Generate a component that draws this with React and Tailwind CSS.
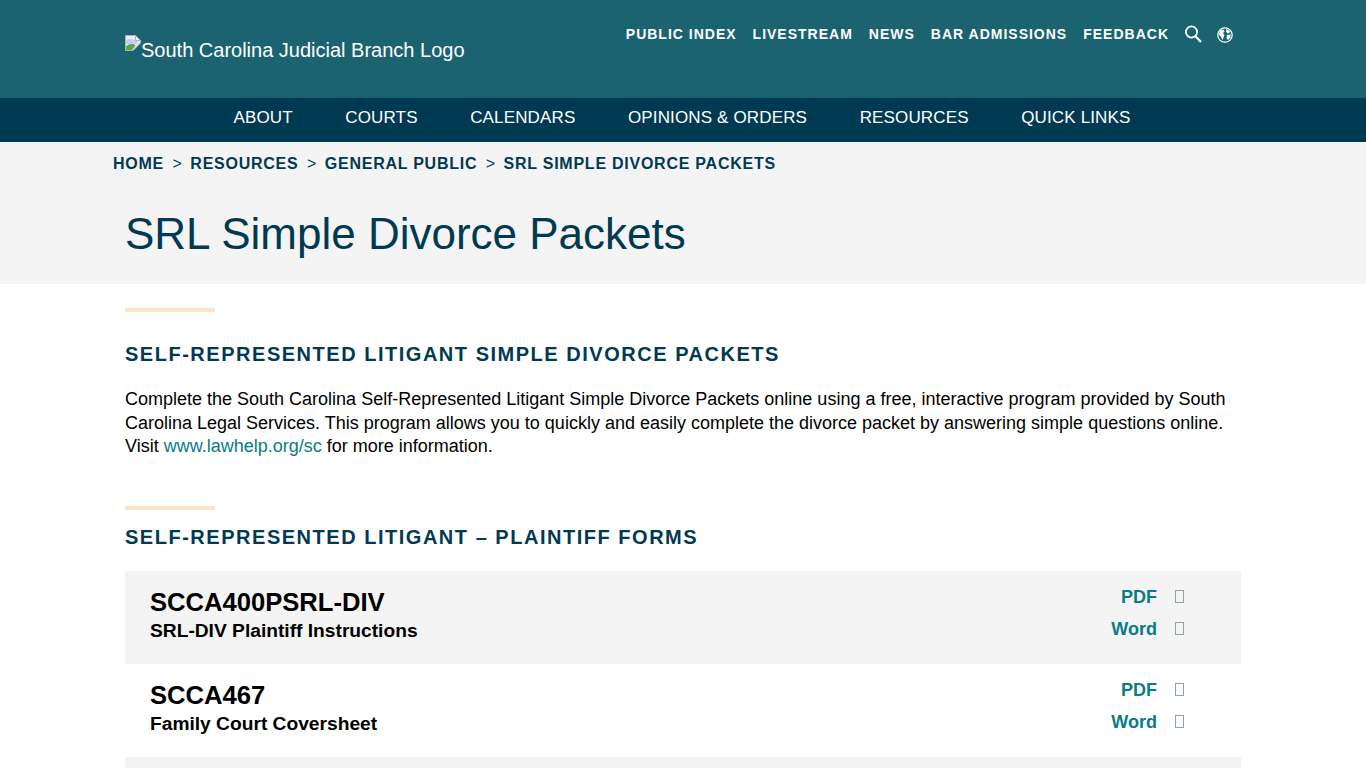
const TOP_LINKS = ['PUBLIC INDEX', 'LIVESTREAM', 'NEWS', 'BAR ADMISSIONS', 'FEEDBACK'];
const NAV_LINKS = ['ABOUT', 'COURTS', 'CALENDARS', 'OPINIONS & ORDERS', 'RESOURCES', 'QUICK LINKS'];
const CRUMBS = ['HOME', 'RESOURCES', 'GENERAL PUBLIC', 'SRL SIMPLE DIVORCE PACKETS'];
const FORMS = [
  { code: 'SCCA400PSRL-DIV', name: 'SRL-DIV Plaintiff Instructions', shaded: true },
  { code: 'SCCA467', name: 'Family Court Coversheet', shaded: false },
];

function BrokenImage() {
  return (
    <svg width="16" height="16" viewBox="0 0 16 16" className="mt-[-2px] shrink-0 self-start">
      <path d="M0.5 0.5H10.5L15.5 5.5V8L8 15.5H0.5Z" fill="#e8eef2" stroke="#a9b4ba" />
      <path d="M1 5.5C4 3.5 8 3.5 13 6.5V7.5L11 9H1Z" fill="#c6cdf2" />
      <path d="M1 15V11.5C4 8.5 8 8.5 10.5 10.5L7 15Z" fill="#5aa845" />
      <path d="M10.5 0.5V5.5H15.5Z" fill="#ffffff" stroke="#a9b4ba" />
    </svg>
  );
}

function SearchIcon() {
  return (
    <svg width="16" height="18" viewBox="0 0 16 18" fill="none" stroke="#ffffff" strokeWidth="1.8" className="overflow-visible">
      <circle cx="6.5" cy="7" r="5.6" />
      <path d="M10.5 11.2L16 17" strokeWidth="2.2" />
    </svg>
  );
}

function GlobeIcon() {
  return (
    <svg width="16" height="16" viewBox="0 0 16 16" className="mt-[1px]">
      <circle cx="8" cy="8" r="7.2" fill="none" stroke="#ffffff" strokeWidth="1.2" />
      <path d="M3 3.5L6.5 2.5L7.5 4.5L6 6L7.5 8L6.5 10.5L5.5 13L4 10L2 7.5Z" fill="#ffffff" />
      <path d="M9.5 2L13 4L12.5 6L10.5 6.5L9 4.5Z" fill="#ffffff" />
      <path d="M10 8L13.5 7.5L13.5 10.5L11 13L9.5 11Z" fill="#ffffff" />
    </svg>
  );
}

function Rule({ className }) {
  return <div className={`h-1 w-[90px] bg-[#fae5c8] ${className}`} />;
}

function FileLink({ label }) {
  return (
    <a className="flex items-center justify-end text-lg leading-[22px] font-bold text-[#0a7b88]">
      <span>{label}</span>
      <span className="ml-[18px] mr-[57px] h-[13px] w-[9px] border border-[#8fa3a8]" />
    </a>
  );
}

function FormRow({ form }) {
  return (
    <div className={`flex h-[93px] justify-between pl-[25px] ${form.shaded ? 'bg-[#f4f4f4]' : 'bg-white'}`}>
      <div className="pt-[15px] font-bold text-black">
        <div className="text-[25.6px] leading-[32px]">{form.code}</div>
        <div className="mt-[1px] text-[19.2px] leading-[24px]">{form.name}</div>
      </div>
      <div className="flex flex-col gap-[10px] pt-[15px]">
        <FileLink label="PDF" />
        <FileLink label="Word" />
      </div>
    </div>
  );
}

export default function App() {
  return (
    <div className="h-[768px] overflow-hidden bg-white font-['Liberation_Sans',Arial,sans-serif]">
      <header className="flex h-[98px] justify-between bg-[#1b6370] pl-[125px] pr-[133px]">
        <a className="mt-[37px] flex h-[16px] items-start text-xl leading-[28px] text-white">
          <BrokenImage />
          <span className="mt-[-1px]">South Carolina Judicial Branch Logo</span>
        </a>
        <div className="flex h-[68px] items-center gap-4">
          {TOP_LINKS.map((link) => (
            <a key={link} className="text-sm font-bold tracking-[1px] text-white">{link}</a>
          ))}
          <SearchIcon />
          <GlobeIcon />
        </div>
      </header>

      <nav className="flex h-[44px] items-center justify-center gap-[52.5px] bg-[#003a52] pb-[4px] pr-[2px]">
        {NAV_LINKS.map((link) => (
          <a key={link} className="text-[17px] tracking-[0.15px] text-white">{link}</a>
        ))}
      </nav>

      <div className="h-[142px] bg-[#f4f4f4]">
        <div className="flex items-center pl-[113px] pt-[11px] text-base leading-[21px] font-bold tracking-[0.75px] text-[#003a52]">
          {CRUMBS.map((crumb, idx) => (
            <span key={crumb} className="flex items-center">
              {idx > 0 && <span className="mx-[8.5px] font-normal tracking-normal">&gt;</span>}
              {crumb}
            </span>
          ))}
        </div>
        <h1 className="pl-[125px] pt-[34px] text-[44px] leading-[52px] text-[#003a52]">SRL Simple Divorce Packets</h1>
      </div>

      <main className="px-[125px]">
        <Rule className="mt-6" />
        <h2 className="mt-[30px] text-xl leading-[24px] font-bold tracking-[1.52px] text-[#003a52]">
          SELF-REPRESENTED LITIGANT SIMPLE DIVORCE PACKETS
        </h2>
        <p className="mt-[22px] text-lg leading-[23.5px] text-black">
          Complete the South Carolina Self-Represented Litigant Simple Divorce Packets online using a free, interactive program provided by South Carolina Legal Services. This program allows you to quickly and easily complete the divorce packet by answering simple questions online. Visit{' '}
          <a className="text-[#0a7b88]">www.lawhelp.org/sc</a> for more information.
        </p>
        <Rule className="mt-[47px]" />
        <h2 className="mt-[15px] text-xl leading-[24px] font-bold tracking-[1.52px] text-[#003a52]">
          SELF-REPRESENTED LITIGANT – PLAINTIFF FORMS
        </h2>
        <div className="mt-[22px]">
          {FORMS.map((form) => (
            <FormRow key={form.code} form={form} />
          ))}
          <div className="h-[93px] bg-[#f4f4f4]" />
        </div>
      </main>
    </div>
  );
}
